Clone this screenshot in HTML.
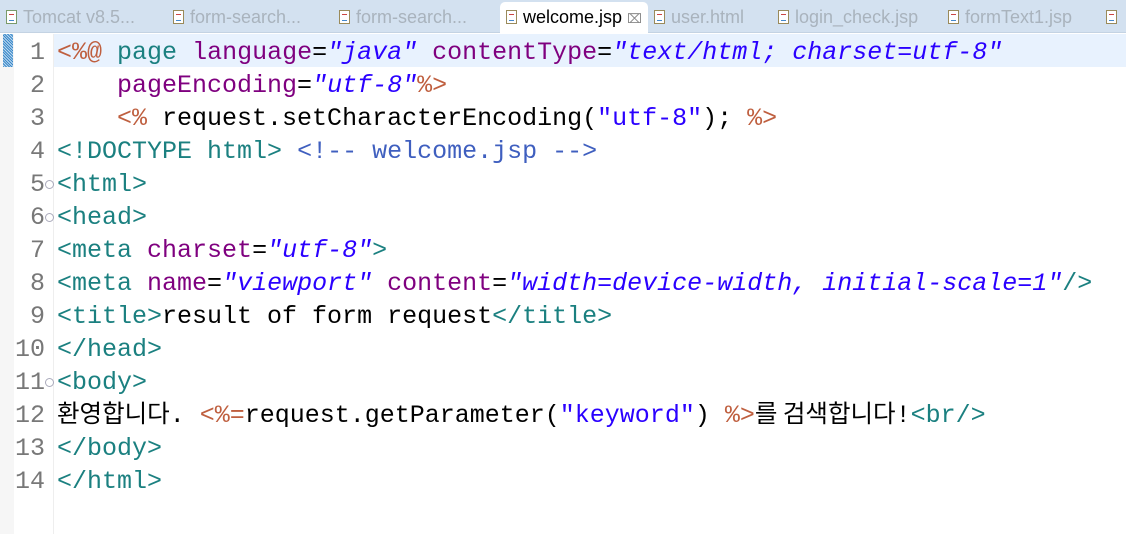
<!DOCTYPE html>
<html><head><meta charset="utf-8"><style>
body{margin:0;width:1126px;height:534px;background:#fff;overflow:hidden;position:relative;font-family:"Liberation Mono",monospace}
#tabs{position:absolute;left:0;top:0;width:1126px;height:32px;background:#d3e1f0;border-bottom:1px solid #c4d3e3}
.tab{position:absolute;top:7px;font:18px "Liberation Sans",sans-serif;color:#a9b3bd;white-space:nowrap}
.ic{display:inline-block;width:9px;height:12px;border:1px solid #9a8a5a;background:#fff;margin-right:6px;vertical-align:-1px;position:relative}
.ic:after{content:"";position:absolute;left:2px;top:3px;width:5px;height:5px;border-top:1px solid #c44;border-bottom:1px solid #48c}
#act{position:absolute;left:500px;top:2px;width:148px;height:32px;background:#fff;border-radius:5px 5px 0 0}
.ln{position:absolute;left:0;width:45px;text-align:right;font-size:25px;color:#787878;line-height:33px;margin-top:2px}
.cl{position:absolute;left:57px;font-size:25px;line-height:33px;white-space:pre;color:#000;margin-top:2px}
.t{color:#1b8080}.a{color:#7f007f}.v{color:#2a00ff;font-style:italic}.j{color:#bf5f3f}.c{color:#3f5fbf}.s{color:#2a00ff}
.k{font-family:"Noto Sans CJK KR",sans-serif;font-size:24.5px;line-height:1}
.f{position:absolute;left:45px;width:7px;height:7px;border:1px solid #aab;border-radius:50%;font-size:0}
</style></head><body>
<div id="tabs">
<div class="tab" style="left:6px"><span class="ic" style="border-color:#7a9a6a"></span>Tomcat v8.5...</div>
<div class="tab" style="left:173px"><span class="ic"></span>form-search...</div>
<div class="tab" style="left:339px"><span class="ic"></span>form-search...</div>
<div id="act"></div>
<div class="tab" style="left:506px;color:#000"><span class="ic"></span>welcome.jsp <span style="color:#888;font-size:13px">⌧</span></div>
<div class="tab" style="left:654px"><span class="ic"></span>user.html</div>
<div class="tab" style="left:778px"><span class="ic"></span>login_check.jsp</div>
<div class="tab" style="left:948px"><span class="ic"></span>formText1.jsp</div>
<div class="tab" style="left:1106px"><span class="ic"></span></div>
</div>
<div style="position:absolute;left:0;top:34px;width:14px;height:500px;background:#f6f6f6"></div>
<div style="position:absolute;left:3px;top:34px;width:10px;height:33px;background:repeating-linear-gradient(45deg,#3a88c8 0 1px,#bcd8f0 1px 2px)"></div>
<div style="position:absolute;left:53px;top:34px;width:1px;height:500px;background:#eee"></div>
<div style="position:absolute;left:54px;top:34px;width:1072px;height:33px;background:#e8f2fe"></div>
<div class="ln" style="top:34px">1</div><div class="ln" style="top:67px">2</div><div class="ln" style="top:100px">3</div><div class="ln" style="top:133px">4</div><div class="ln" style="top:166px">5</div><div class="ln" style="top:199px">6</div><div class="ln" style="top:232px">7</div><div class="ln" style="top:265px">8</div><div class="ln" style="top:298px">9</div><div class="ln" style="top:331px">10</div><div class="ln" style="top:364px">11</div><div class="ln" style="top:397px">12</div><div class="ln" style="top:430px">13</div><div class="ln" style="top:463px">14</div>
<div class="f" style="top:180px"></div><div class="f" style="top:213px"></div><div class="f" style="top:378px"></div>
<div class="cl" style="top:34px"><span class="j">&lt;%@</span> <span class="t">page</span> <span class="a">language</span>=<span class="v">"java"</span> <span class="a">contentType</span>=<span class="v">"text/html; charset=utf-8"</span></div>
<div class="cl" style="top:67px">    <span class="a">pageEncoding</span>=<span class="v">"utf-8"</span><span class="j">%&gt;</span></div>
<div class="cl" style="top:100px">    <span class="j">&lt;%</span> request.setCharacterEncoding(<span class="s">"utf-8"</span>); <span class="j">%&gt;</span></div>
<div class="cl" style="top:133px"><span class="t">&lt;!DOCTYPE html&gt;</span> <span class="c">&lt;!-- welcome.jsp --&gt;</span></div>
<div class="cl t" style="top:166px">&lt;html&gt;</div>
<div class="cl t" style="top:199px">&lt;head&gt;</div>
<div class="cl" style="top:232px"><span class="t">&lt;meta</span> <span class="a">charset</span>=<span class="v">"utf-8"</span><span class="t">&gt;</span></div>
<div class="cl" style="top:265px"><span class="t">&lt;meta</span> <span class="a">name</span>=<span class="v">"viewport"</span> <span class="a">content</span>=<span class="v">"width=device-width, initial-scale=1"</span><span class="t">/&gt;</span></div>
<div class="cl" style="top:298px"><span class="t">&lt;title&gt;</span>result of form request<span class="t">&lt;/title&gt;</span></div>
<div class="cl t" style="top:331px">&lt;/head&gt;</div>
<div class="cl t" style="top:364px">&lt;body&gt;</div>
<div class="cl" style="top:397px"><span class="k">환영합니다</span>. <span class="j">&lt;%=</span>request.getParameter(<span class="s">"keyword"</span>) <span class="j">%&gt;</span><span class="k">를 검색합니다</span>!<span class="t">&lt;br/&gt;</span></div>
<div class="cl t" style="top:430px">&lt;/body&gt;</div>
<div class="cl t" style="top:463px">&lt;/html&gt;</div>
</body></html>
